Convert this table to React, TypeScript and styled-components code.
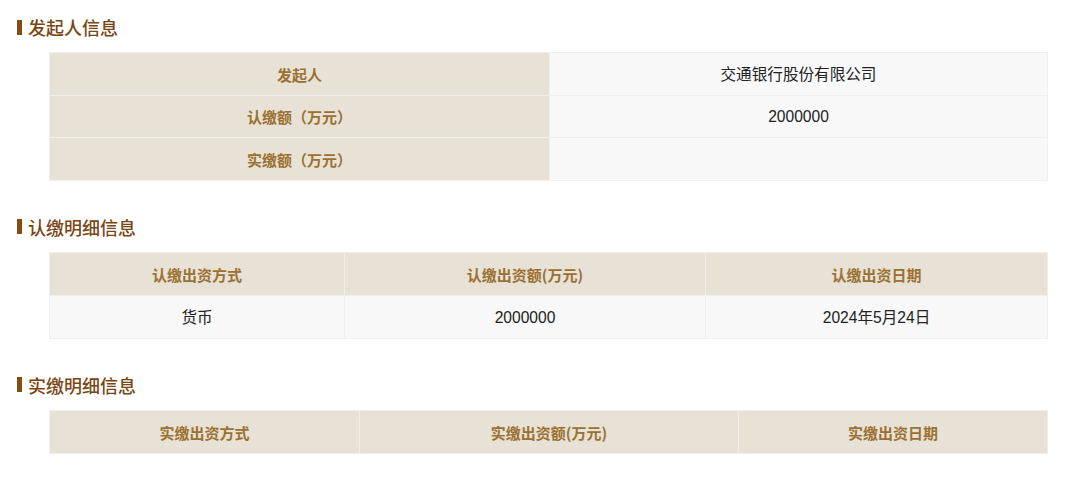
import styled, { createGlobalStyle } from "styled-components";

const GlobalStyle = createGlobalStyle`
  body {
    margin: 0;
    background: #ffffff;
    font-family: "Noto Sans CJK SC", "Noto Sans", sans-serif;
  }
`;

const Page = styled.main`
  width: 1080px;
  padding: 15px 32px 0 17px;
  box-sizing: border-box;
  display: flex;
  flex-direction: column;
`;

const Section = styled.section`
  display: flex;
  flex-direction: column;
  gap: 13px;
  margin-bottom: 34px;
`;

const Title = styled.h2`
  margin: 0;
  height: 24px;
  display: flex;
  align-items: center;
  gap: 6px;
  font-size: 18px;
  font-weight: 500;
  line-height: 24px;
  color: #7a4513;

  &::before {
    content: "";
    width: 5px;
    height: 15px;
    background: #8a4a14;
  }
`;

const Table = styled.div<{ $cols: string; $row?: string }>`
  margin-left: 32px;
  width: 999px;
  display: grid;
  grid-template-columns: ${(p) => p.$cols};
  grid-auto-rows: ${(p) => p.$row || "42px"};
  gap: 1px;
  background: #efefef;
  border: 1px solid #efefef;
  box-sizing: border-box;
`;

const Cell = styled.div<{ $head?: boolean }>`
  display: flex;
  align-items: center;
  justify-content: center;
  line-height: 1;
  padding-top: 1px;
  font-size: ${(p) => (p.$head ? "15px" : "15.6px")};
  background: ${(p) => (p.$head ? "#e8e1d6" : "#f8f8f8")};
  color: ${(p) => (p.$head ? "#9a7131" : "#222222")};
  font-weight: ${(p) => (p.$head ? 700 : 400)};
  font-family: ${(p) =>
    p.$head
      ? `"Noto Sans CJK SC", sans-serif`
      : `"Liberation Sans", "Noto Sans CJK SC", sans-serif`};
`;

const founder = [
  ["发起人", "交通银行股份有限公司"],
  ["认缴额（万元）", "2000000"],
  ["实缴额（万元）", ""],
];

export default function App() {
  return (
    <Page>
      <GlobalStyle />
      <Section>
        <Title>发起人信息</Title>
        <Table $cols="499px 1fr" $row="41.67px">
          {founder.flatMap(([k, v]) => [
            <Cell key={k} $head>{k}</Cell>,
            <Cell key={k + "-v"}>{v}</Cell>,
          ])}
        </Table>
      </Section>

      <Section>
        <Title>认缴明细信息</Title>
        <Table $cols="294px 360px 1fr">
          <Cell $head>认缴出资方式</Cell>
          <Cell $head>认缴出资额(万元)</Cell>
          <Cell $head>认缴出资日期</Cell>
          <Cell>货币</Cell>
          <Cell>2000000</Cell>
          <Cell>2024年5月24日</Cell>
        </Table>
      </Section>

      <Section>
        <Title>实缴明细信息</Title>
        <Table $cols="309px 378px 1fr">
          <Cell $head>实缴出资方式</Cell>
          <Cell $head>实缴出资额(万元)</Cell>
          <Cell $head>实缴出资日期</Cell>
        </Table>
      </Section>
    </Page>
  );
}
